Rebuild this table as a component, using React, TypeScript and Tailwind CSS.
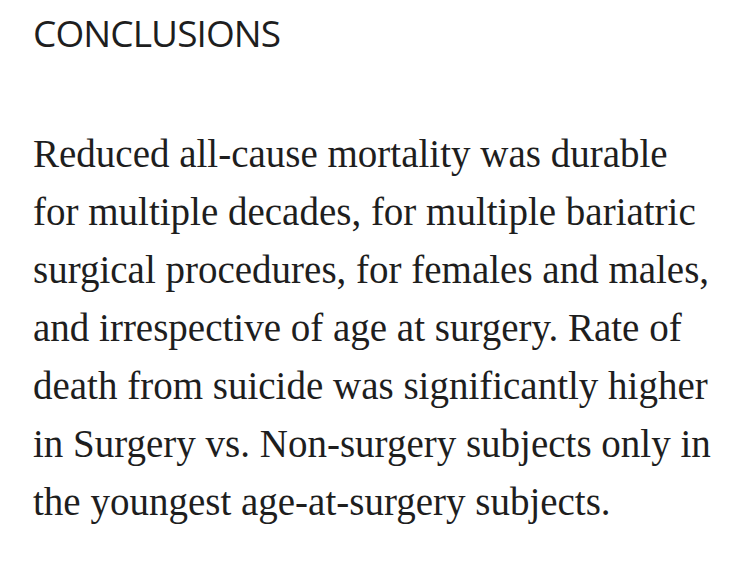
import React from 'react'

const lines = [
  'Reduced all-cause mortality was durable',
  'for multiple decades, for multiple bariatric',
  'surgical procedures, for females and males,',
  'and irrespective of age at surgery. Rate of',
  'death from suicide was significantly higher',
  'in Surgery vs. Non-surgery subjects only in',
  'the youngest age-at-surgery subjects.',
]

const App = () => {
  return (
    <div className="w-[750px] h-[568px] bg-white px-[33px] pt-[14px] text-[#1e1e1e] overflow-hidden">
      <h2 className="text-[37px] leading-[37px] font-normal font-['Open_Sans',sans-serif] tracking-[-0.9px]">
        CONCLUSIONS
      </h2>
      <p className="mt-[74px] text-[39px] leading-[58px] font-['Liberation_Serif',serif] whitespace-nowrap">
        {lines.map((l, i) => (
          <span key={i} className="block">
            {l}
          </span>
        ))}
      </p>
    </div>
  )
}

export default App
